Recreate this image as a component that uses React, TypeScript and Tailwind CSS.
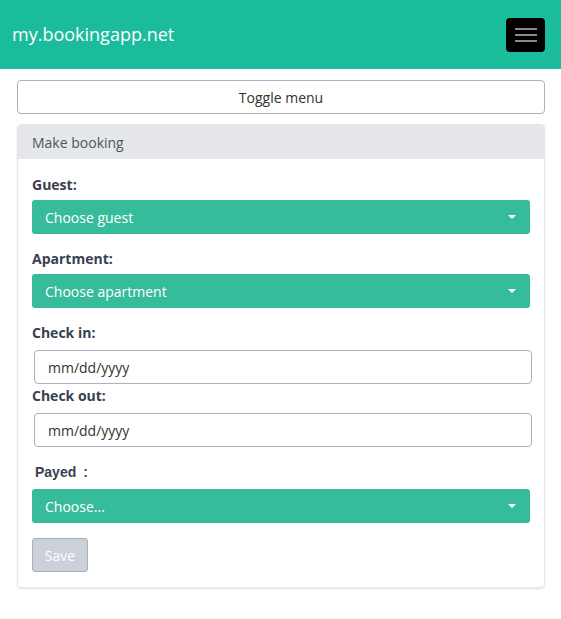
import React from "react";

function Caret() {
  return (
    <svg width="10" height="6" viewBox="0 0 10 6" className="shrink-0">
      <path d="M1 1h8L5 5z" fill="#fff" />
    </svg>
  );
}

function GreenSelect({ label }: { label: string }) {
  return (
    <div className="flex h-[34px] items-center justify-between rounded-[3px] bg-[#37bc9b] pl-[13px] pr-[13px] text-[14px] text-white">
      <span>{label}</span>
      <Caret />
    </div>
  );
}

function DateInput() {
  return (
    <div className="-mr-[2px] ml-[2px] flex h-[34px] items-center rounded-[4px] border border-[#aab0bd] pl-[13px] text-[14px] text-[#333]">
      mm/dd/yyyy
    </div>
  );
}

export default function App() {
  return (
    <div className="min-h-[619px] bg-white font-['Open_Sans',sans-serif] text-[#374151]">
      <nav className="flex h-[69px] items-center justify-between bg-[#1abc9c] pl-[12px] pr-[16px]">
        <span className="text-[18px] text-white">my.bookingapp.net</span>
        <button className="flex h-[34px] w-[39px] flex-col items-center justify-center gap-[4px] rounded-[4px] bg-black">
          <span className="block h-[2px] w-[22px] bg-[#8a8a8a]" />
          <span className="block h-[2px] w-[22px] bg-[#8a8a8a]" />
          <span className="block h-[2px] w-[22px] bg-[#8a8a8a]" />
        </button>
      </nav>

      <div className="px-[17px] pt-[11px]">
        <button className="h-[34px] w-[528px] rounded-[4px] border border-[#aab0bd] bg-white text-[14px] text-[#333]">
          Toggle menu
        </button>

        <div className="mt-[10px] w-[528px] overflow-hidden rounded-[4px] border border-[#e5e7eb] shadow-[0_1px_2px_rgba(0,0,0,0.12)]">
          <div className="flex h-[34px] items-center bg-[#e5e7eb] px-[14px] text-[14px] text-[#4b5563]">
            Make booking
          </div>
          <div className="px-[14px] pb-[15px] pt-[15px]">
            <div className="mb-[5px] text-[14px] font-bold">Guest:</div>
            <GreenSelect label="Choose guest" />

            <div className="mb-[5px] mt-[14px] text-[14px] font-bold">Apartment:</div>
            <GreenSelect label="Choose apartment" />

            <div className="mb-[7px] mt-[14px] text-[14px] font-bold">Check in:</div>
            <DateInput />

            <div className="mb-[7px] mt-[1px] text-[14px] font-bold">Check out:</div>
            <DateInput />

            <div className="mb-[6px] ml-[3px] mt-[15px] font-['Liberation_Sans',sans-serif] text-[14px] font-bold">
              Payed <span className="ml-[3px]">:</span>
            </div>
            <GreenSelect label="Choose..." />

            <button className="mt-[15px] h-[34px] w-[56px] rounded-[3px] border border-[#aab0bd] bg-[#cbd0d9] text-[14px] text-white">
              Save
            </button>
          </div>
        </div>
      </div>
    </div>
  );
}
